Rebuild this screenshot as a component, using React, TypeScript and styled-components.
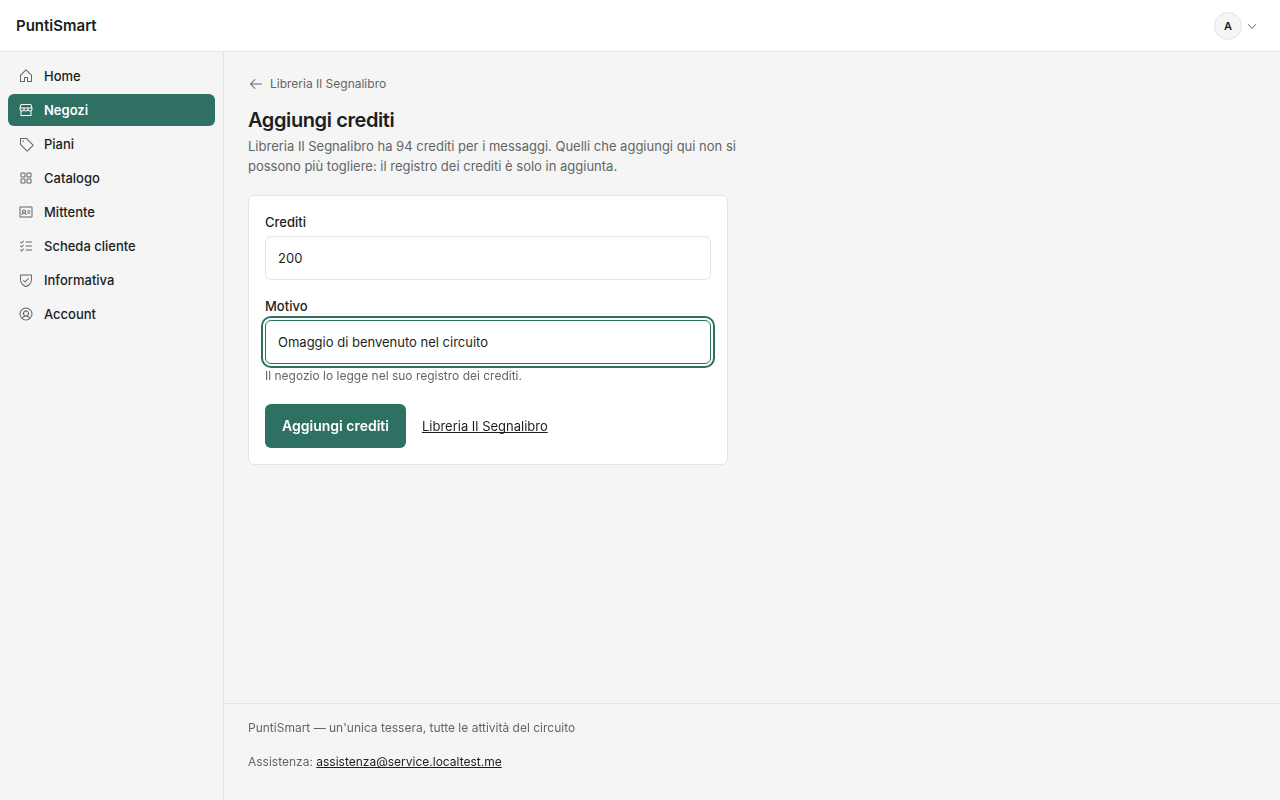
import React from "react";
import styled, { createGlobalStyle } from "styled-components";
import {
  PiArrowLeft,
  PiCaretDown,
  PiHouse,
  PiIdentificationCard,
  PiListChecks,
  PiShieldCheck,
  PiSquaresFour,
  PiStorefront,
  PiTag,
  PiUserCircle,
} from "react-icons/pi";

const color = {
  page: "#f5f5f5",
  surface: "#ffffff",
  line: "#e3e4e4",
  ink: "#1b1f1e",
  muted: "#626665",
  brand: "#2e7062",
};

const GlobalStyle = createGlobalStyle`
  *, *::before, *::after { box-sizing: border-box; }
  body {
    margin: 0;
    background: ${color.page};
    color: ${color.ink};
    font-family: Inter, "Liberation Sans", sans-serif;
    font-size: 13px;
    line-height: 20px;
    -webkit-font-smoothing: antialiased;
  }
  h1, p { margin: 0; }
  input, button { font: inherit; }
`;

const Shell = styled.div`
  display: flex;
  flex-direction: column;
  min-height: 100vh;
`;

const TopBar = styled.header`
  display: flex;
  align-items: center;
  justify-content: space-between;
  height: 52px;
  padding: 0 22px 0 16px;
  background: ${color.surface};
  border-bottom: 1px solid ${color.line};
`;

const Brand = styled.a`
  color: inherit;
  font-size: 15px;
  font-weight: 600;
  text-decoration: none;
`;

const AccountButton = styled.button`
  display: flex;
  align-items: center;
  gap: 4px;
  padding: 0;
  border: 0;
  background: none;
  color: ${color.muted};
`;

const Avatar = styled.span`
  display: grid;
  place-items: center;
  width: 28px;
  height: 28px;
  border: 1px solid ${color.line};
  border-radius: 50%;
  background: ${color.page};
  color: ${color.ink};
  font-size: 11px;
  font-weight: 600;
`;

const Body = styled.div`
  display: flex;
  flex: 1;
`;

const Sidebar = styled.nav`
  display: flex;
  flex-direction: column;
  gap: 2px;
  width: 224px;
  flex-shrink: 0;
  padding: 8px;
  border-right: 1px solid ${color.line};
`;

const NavLink = styled.a<{ $active?: boolean }>`
  display: flex;
  align-items: center;
  gap: 10px;
  height: 32px;
  padding: 0 10px;
  border-radius: 6px;
  background: ${(p) => (p.$active ? color.brand : "transparent")};
  color: ${(p) => (p.$active ? "#ffffff" : color.ink)};
  font-weight: ${(p) => (p.$active ? 600 : 500)};
  text-decoration: none;

  svg {
    color: ${(p) => (p.$active ? "#ffffff" : color.muted)};
  }
`;

const Column = styled.div`
  display: flex;
  flex: 1;
  flex-direction: column;
  min-width: 0;
`;

const Main = styled.main`
  flex: 1;
  padding: 24px;
`;

const BackLink = styled.a`
  display: flex;
  align-items: center;
  gap: 6px;
  height: 16px;
  color: ${color.muted};
  font-size: 12px;
  text-decoration: none;
`;

const Title = styled.h1`
  margin-top: 16px;
  font-size: 20px;
  font-weight: 600;
  line-height: 24px;
  letter-spacing: -0.02em;
`;

const Intro = styled.p`
  max-width: 504px;
  margin-top: 4px;
  color: ${color.muted};
`;

const Card = styled.form`
  display: flex;
  flex-direction: column;
  max-width: 480px;
  margin-top: 19px;
  padding: 16px;
  border: 1px solid ${color.line};
  border-radius: 6px;
  background: ${color.surface};
`;

const Field = styled.div`
  display: flex;
  flex-direction: column;
  gap: 4px;
  margin-bottom: 16px;
`;

const Label = styled.label`
  font-weight: 500;
`;

const Input = styled.input`
  width: 100%;
  height: 44px;
  padding: 0 12px;
  border: 1px solid ${color.line};
  border-radius: 6px;
  background: ${color.surface};
  color: ${color.ink};

  &:focus {
    border-color: ${color.brand};
    outline: 2px solid ${color.brand};
    outline-offset: 2px;
    caret-color: transparent;
  }
`;

const Hint = styled.p`
  color: ${color.muted};
  font-size: 12px;
  line-height: 16px;
`;

const Actions = styled.div`
  display: flex;
  align-items: center;
  gap: 16px;
  margin-top: 4px;
`;

const Submit = styled.button`
  height: 44px;
  padding: 0 17px;
  border: 0;
  border-radius: 6px;
  background: ${color.brand};
  color: #ffffff;
  font-size: 14px;
  font-weight: 600;
`;

const TextLink = styled.a`
  color: ${color.ink};
  text-decoration-skip-ink: none;
  text-underline-offset: 1px;
`;

const Footer = styled.footer`
  display: flex;
  flex-direction: column;
  gap: 18px;
  padding: 16px 24px 30px;
  border-top: 1px solid ${color.line};
  color: ${color.muted};
  font-size: 12px;
  line-height: 16px;
`;

const links = [
  { label: "Home", Icon: PiHouse },
  { label: "Negozi", Icon: PiStorefront, active: true },
  { label: "Piani", Icon: PiTag },
  { label: "Catalogo", Icon: PiSquaresFour },
  { label: "Mittente", Icon: PiIdentificationCard },
  { label: "Scheda cliente", Icon: PiListChecks },
  { label: "Informativa", Icon: PiShieldCheck },
  { label: "Account", Icon: PiUserCircle },
];

export default function App() {
  return (
    <Shell>
      <GlobalStyle />
      <TopBar>
        <Brand href="#">PuntiSmart</Brand>
        <AccountButton type="button">
          <Avatar>A</Avatar>
          <PiCaretDown size={12} />
        </AccountButton>
      </TopBar>
      <Body>
        <Sidebar>
          {links.map(({ label, Icon, active }) => (
            <NavLink key={label} href="#" $active={active} aria-current={active ? "page" : undefined}>
              <Icon size={16} />
              {label}
            </NavLink>
          ))}
        </Sidebar>
        <Column>
          <Main>
            <BackLink href="#">
              <PiArrowLeft size={16} />
              Libreria Il Segnalibro
            </BackLink>
            <Title>Aggiungi crediti</Title>
            <Intro>
              Libreria Il Segnalibro ha 94 crediti per i messaggi. Quelli che aggiungi qui non si
              possono più togliere: il registro dei crediti è solo in aggiunta.
            </Intro>
            <Card onSubmit={(e) => e.preventDefault()}>
              <Field>
                <Label htmlFor="crediti">Crediti</Label>
                <Input id="crediti" inputMode="numeric" defaultValue="200" />
              </Field>
              <Field>
                <Label htmlFor="motivo">Motivo</Label>
                <Input
                  id="motivo"
                  defaultValue="Omaggio di benvenuto nel circuito"
                  aria-describedby="motivo-hint"
                  autoFocus
                />
                <Hint id="motivo-hint">Il negozio lo legge nel suo registro dei crediti.</Hint>
              </Field>
              <Actions>
                <Submit type="submit">Aggiungi crediti</Submit>
                <TextLink href="#">Libreria Il Segnalibro</TextLink>
              </Actions>
            </Card>
          </Main>
          <Footer>
            <p>PuntiSmart — un'unica tessera, tutte le attività del circuito</p>
            <p>
              Assistenza: <TextLink href="#">assistenza@service.localtest.me</TextLink>
            </p>
          </Footer>
        </Column>
      </Body>
    </Shell>
  );
}
